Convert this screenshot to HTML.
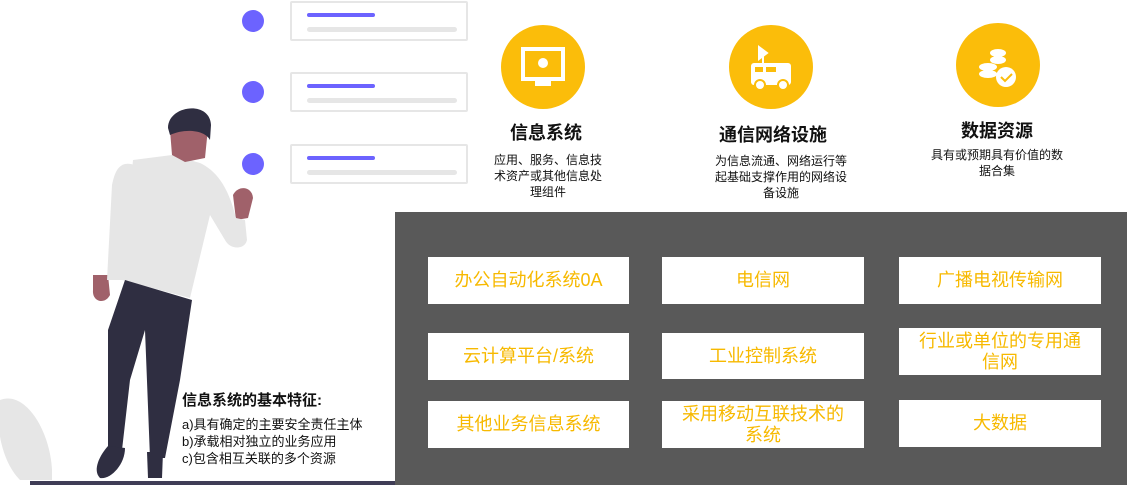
<!DOCTYPE html>
<html><head><meta charset="utf-8"><style>
*{margin:0;padding:0;box-sizing:border-box}
body{width:1127px;height:485px;background:#fff;position:relative;overflow:hidden;font-family:"Liberation Sans","Noto Sans CJK SC",sans-serif}
.a{position:absolute}
.dot{position:absolute;width:22px;height:22px;border-radius:50%;background:#6c63ff;left:242px}
.card{position:absolute;left:290px;width:178px;height:40px;border:2px solid #e6e6e6;border-radius:2px;background:#fff}
.card i{position:absolute;left:15px;top:10px;width:68px;height:4px;border-radius:2px;background:#6c63ff}
.card b{position:absolute;left:15px;top:24px;width:150px;height:5px;border-radius:3px;background:#e6e6e6}
.circ{position:absolute;width:84px;height:84px;border-radius:50%;background:#fbbd0a}
.tt{position:absolute;font-weight:bold;font-size:18px;color:#111;text-align:center;width:200px}
.ds{position:absolute;font-size:12px;line-height:16px;color:#111;text-align:center}
.panel{position:absolute;left:395px;top:212px;width:732px;height:273px;background:#595959}
.bx{position:absolute;background:#fff;color:#f7b900;font-size:18px;line-height:21px;display:flex;align-items:center;justify-content:center;text-align:center;padding:0 13px}
</style></head><body>
<div class="dot" style="top:10px"></div>
<div class="dot" style="top:81px"></div>
<div class="dot" style="top:153px"></div>
<div class="card" style="top:1px"><i></i><b></b></div>
<div class="card" style="top:72px"><i></i><b></b></div>
<div class="card" style="top:144px"><i></i><b></b></div>

<svg class="a" style="left:0;top:0" width="400" height="485">
<path d="M0 400 C25 390 50 430 52 470 L52 480 L20 480 C0 460 -5 420 0 400Z" fill="#e6e6e6"/>
<path d="M233 195 C238 185 252 186 253 198 L248 218 L236 220Z" fill="#a0616a"/>
<path d="M93 275 L108 275 L110 295 C105 305 92 302 93 290Z" fill="#a0616a"/>
<path d="M107 280 L124 280 L135 165 C120 160 115 170 112 185Z" fill="#e6e6e6"/>
<path d="M133 160 L172 155 L200 163 C215 170 228 185 236 218 L245 220 L247 240 C245 250 230 250 225 240 L210 215 L190 298 L122 280Z" fill="#e6e6e6"/>
<path d="M170 130 L208 128 L205 158 L185 162 L172 155Z" fill="#a0616a"/>
<path d="M168 128 C168 105 210 100 211 125 L210 140 C205 130 185 128 170 135Z" fill="#2f2e41"/>
<path d="M125 280 L192 300 L180 380 L165 458 L150 458 L145 330 L130 380 L122 450 L108 452 L108 330Z" fill="#2f2e41"/>
<path d="M108 446 L125 448 C125 465 110 480 100 478 C92 470 100 455 108 446Z" fill="#2f2e41"/>
<path d="M147 452 L163 452 L162 478 L148 478Z" fill="#2f2e41"/>
<rect x="30" y="481" width="397" height="4" fill="#3f3d56"/>
</svg>

<div class="a" style="left:182px;top:389px;font-size:15px;font-weight:bold;color:#111">信息系统的基本特征:</div>
<div class="a" style="left:182px;top:416px;font-size:13px;line-height:17px;color:#111">a)具有确定的主要安全责任主体<br>b)承载相对独立的业务应用<br>c)包含相互关联的多个资源</div>

<div class="circ" style="left:501px;top:25px"></div>
<div class="circ" style="left:729px;top:25px"></div>
<div class="circ" style="left:956px;top:23px"></div>
<svg class="a" style="left:501px;top:25px" width="84" height="84"><rect x="22" y="24" width="40" height="30" fill="none" stroke="#fff" stroke-width="4"/><rect x="34" y="55" width="16" height="6" fill="#fff"/><circle cx="42" cy="38" r="5" fill="#fff"/></svg>
<svg class="a" style="left:729px;top:25px" width="84" height="84"><rect x="22" y="38" width="40" height="22" rx="3" fill="#fff"/><rect x="26" y="42" width="8" height="5" fill="#fbbd0a"/><rect x="37" y="42" width="10" height="5" fill="#fbbd0a"/><circle cx="31" cy="60" r="5" fill="#fff" stroke="#fbbd0a" stroke-width="2"/><circle cx="54" cy="60" r="5" fill="#fff" stroke="#fbbd0a" stroke-width="2"/><path d="M30 22 l8 6 l-8 6z M34 28 v10" stroke="#fff" stroke-width="2" fill="#fff"/></svg>
<svg class="a" style="left:956px;top:23px" width="84" height="84"><ellipse cx="42" cy="30" rx="8" ry="4" fill="#fff"/><ellipse cx="42" cy="37" rx="8" ry="4" fill="#fff"/><ellipse cx="32" cy="44" rx="9" ry="4" fill="#fff"/><ellipse cx="32" cy="51" rx="9" ry="4" fill="#fff"/><circle cx="50" cy="54" r="10" fill="#fff"/><path d="M45 54 l4 4 l7 -7" stroke="#fbbd0a" stroke-width="2" fill="none"/></svg>

<div class="tt" style="left:446px;top:119px">信息系统</div>
<div class="tt" style="left:673px;top:121px">通信网络设施</div>
<div class="tt" style="left:897px;top:117px">数据资源</div>
<div class="ds" style="left:492px;top:152px;width:112px">应用、服务、信息技术资产或其他信息处理组件</div>
<div class="ds" style="left:713px;top:153px;width:136px">为信息流通、网络运行等起基础支撑作用的网络设备设施</div>
<div class="ds" style="left:929px;top:147px;width:136px">具有或预期具有价值的数据合集</div>

<div class="panel"></div>
<div class="bx" style="left:428px;top:257px;width:201px;height:47px">办公自动化系统0A</div>
<div class="bx" style="left:662px;top:257px;width:202px;height:47px">电信网</div>
<div class="bx" style="left:899px;top:257px;width:202px;height:47px">广播电视传输网</div>
<div class="bx" style="left:428px;top:333px;width:201px;height:47px">云计算平台/系统</div>
<div class="bx" style="left:662px;top:333px;width:202px;height:46px">工业控制系统</div>
<div class="bx" style="left:899px;top:328px;width:202px;height:47px">行业或单位的专用通信网</div>
<div class="bx" style="left:428px;top:401px;width:201px;height:47px">其他业务信息系统</div>
<div class="bx" style="left:662px;top:401px;width:202px;height:47px">采用移动互联技术的系统</div>
<div class="bx" style="left:899px;top:400px;width:202px;height:47px">大数据</div>
</body></html>
